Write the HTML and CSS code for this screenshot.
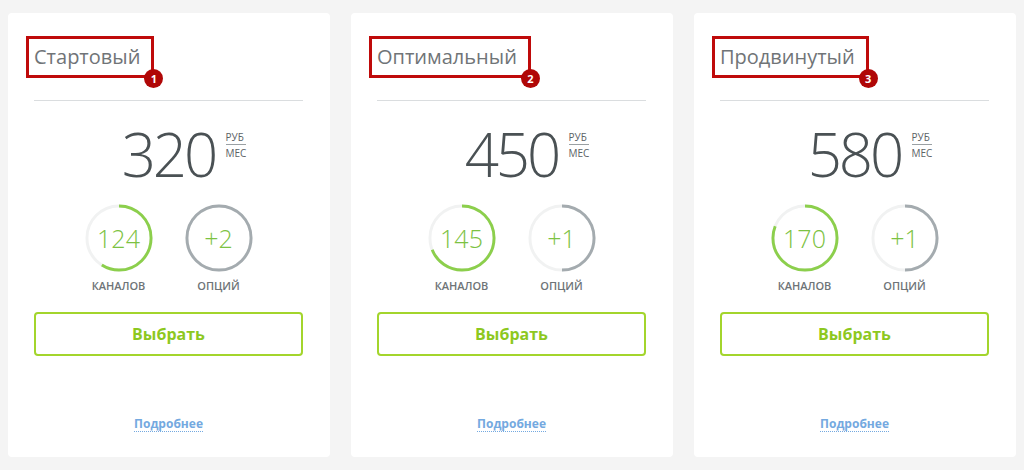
FILE: index.html
```html
<!DOCTYPE html>
<html lang="ru">
<head>
<meta charset="utf-8">
<link rel="stylesheet" href="styles.css">
</head>
<body>
<div class="plans">
  <div class="card">
    <div class="head"><span class="mark">Стартовый<span class="badge">1</span></span></div>
    <div class="rule"></div>
    <div class="price"><span class="num">320</span><span class="unit"><span class="u1">РУБ</span><span class="u2">МЕС</span></span></div>
    <div class="stats">
      <div class="stat">
        <div class="ring">
          <svg viewBox="0 0 70 70"><circle class="track" cx="35" cy="35" r="33"/><circle class="bar green" cx="35" cy="35" r="33" pathLength="100" stroke-dasharray="59 100"/></svg>
          <span class="val">124</span>
        </div>
        <div class="lbl">КАНАЛОВ</div>
      </div>
      <div class="stat">
        <div class="ring">
          <svg viewBox="0 0 70 70"><circle class="track" cx="35" cy="35" r="33"/><circle class="bar gray" cx="35" cy="35" r="33" pathLength="100" stroke-dasharray="100 100"/></svg>
          <span class="val">+2</span>
        </div>
        <div class="lbl">ОПЦИЙ</div>
      </div>
    </div>
    <button class="btn">Выбрать</button>
    <a class="more" href="#">Подробнее</a>
  </div>
  <div class="card">
    <div class="head"><span class="mark">Оптимальный<span class="badge">2</span></span></div>
    <div class="rule"></div>
    <div class="price"><span class="num">450</span><span class="unit"><span class="u1">РУБ</span><span class="u2">МЕС</span></span></div>
    <div class="stats">
      <div class="stat">
        <div class="ring">
          <svg viewBox="0 0 70 70"><circle class="track" cx="35" cy="35" r="33"/><circle class="bar green" cx="35" cy="35" r="33" pathLength="100" stroke-dasharray="69 100"/></svg>
          <span class="val">145</span>
        </div>
        <div class="lbl">КАНАЛОВ</div>
      </div>
      <div class="stat">
        <div class="ring">
          <svg viewBox="0 0 70 70"><circle class="track" cx="35" cy="35" r="33"/><circle class="bar gray" cx="35" cy="35" r="33" pathLength="100" stroke-dasharray="50 100"/></svg>
          <span class="val">+1</span>
        </div>
        <div class="lbl">ОПЦИЙ</div>
      </div>
    </div>
    <button class="btn">Выбрать</button>
    <a class="more" href="#">Подробнее</a>
  </div>
  <div class="card">
    <div class="head"><span class="mark">Продвинутый<span class="badge">3</span></span></div>
    <div class="rule"></div>
    <div class="price"><span class="num">580</span><span class="unit"><span class="u1">РУБ</span><span class="u2">МЕС</span></span></div>
    <div class="stats">
      <div class="stat">
        <div class="ring">
          <svg viewBox="0 0 70 70"><circle class="track" cx="35" cy="35" r="33"/><circle class="bar green" cx="35" cy="35" r="33" pathLength="100" stroke-dasharray="81 100"/></svg>
          <span class="val">170</span>
        </div>
        <div class="lbl">КАНАЛОВ</div>
      </div>
      <div class="stat">
        <div class="ring">
          <svg viewBox="0 0 70 70"><circle class="track" cx="35" cy="35" r="33"/><circle class="bar gray" cx="35" cy="35" r="33" pathLength="100" stroke-dasharray="50 100"/></svg>
          <span class="val">+1</span>
        </div>
        <div class="lbl">ОПЦИЙ</div>
      </div>
    </div>
    <button class="btn">Выбрать</button>
    <a class="more" href="#">Подробнее</a>
  </div>
</div>
</body>
</html>
```

FILE: styles.css
```css
* { box-sizing: border-box; }
html, body { margin: 0; padding: 0; }
body {
  background: #f4f4f4;
  font-family: "Open Sans", "Liberation Sans", sans-serif;
  width: 1024px;
  height: 470px;
  overflow: hidden;
}
.plans {
  display: flex;
  gap: 21px;
  padding: 13px 8px;
}
.card {
  flex: 1;
  height: 444px;
  background: #fff;
  border-radius: 4px;
  padding: 23px 27px 0 26px;
  display: flex;
  flex-direction: column;
}
.head {
  height: 42px;
  margin-left: -8px;
}
.mark {
  position: relative;
  display: inline-block;
  border: 3px solid #bf0a0a;
  padding: 4px 11px 4px 5px;
  font-size: 20px;
  line-height: 28px;
  color: #707477;
  font-weight: 400;
}
.badge {
  position: absolute;
  right: -12px;
  bottom: -13px;
  width: 19px;
  height: 19px;
  border-radius: 50%;
  background: #b00707;
  color: #fff;
  font-size: 11px;
  font-weight: 700;
  line-height: 19px;
  text-align: center;
}
.rule {
  margin-top: 22px;
  height: 1px;
  background: #dadddf;
}
.price {
  margin-top: 22px;
  position: relative;
  display: flex;
  justify-content: center;
  height: 62px;
}
.num {
  position: relative;
  font-size: 60px;
  font-weight: 300;
  line-height: 62px;
  color: #4a5154;
  letter-spacing: -3px;
}
.unit {
  position: absolute;
  left: calc(50% + 57px);
  top: 8px;
  display: flex;
  flex-direction: column;
  font-size: 10px;
  line-height: 12px;
  color: #5c6366;
  font-weight: 400;
}
.u1 {
  border-bottom: 1px solid #9aa0a3;
  padding-bottom: 1px;
}
.u2 { padding-top: 2px; }
.stats {
  margin-top: 19px;
  display: flex;
  justify-content: center;
  gap: 32px;
}
.stat {
  display: flex;
  flex-direction: column;
  align-items: center;
  width: 68px;
}
.ring {
  position: relative;
  width: 68px;
  height: 68px;
}
.ring svg {
  width: 68px;
  height: 68px;
  display: block;
  transform: rotate(-90deg);
}
.track { fill: none; stroke: #f1f2f2; stroke-width: 3; }
.bar { fill: none; stroke-width: 3; }
.bar.green { stroke: #8ccf4c; }
.bar.gray { stroke: #a4abaf; }
.val {
  position: absolute;
  inset: 0;
  display: flex;
  align-items: center;
  justify-content: center;
  font-size: 25px;
  font-weight: 300;
  color: #7cc242;
}
.lbl {
  margin-top: 7px;
  font-size: 11px;
  font-weight: 600;
  color: #6e7477;
  line-height: 14px;
  white-space: nowrap;
}
.btn {
  margin-top: 19px;
  height: 44px;
  width: 100%;
  background: #fff;
  border: 2px solid #a3d52c;
  border-radius: 4px;
  font-family: "Open Sans", "Liberation Sans", sans-serif;
  font-size: 16px;
  font-weight: 700;
  color: #8dc81f;
  padding: 0;
}
.more {
  align-self: center;
  margin-top: 60px;
  font-size: 12px;
  font-weight: 700;
  color: #74a9e0;
  text-decoration: none;
  border-bottom: 1px dotted #74a9e0;
  line-height: 15px;
}
```
